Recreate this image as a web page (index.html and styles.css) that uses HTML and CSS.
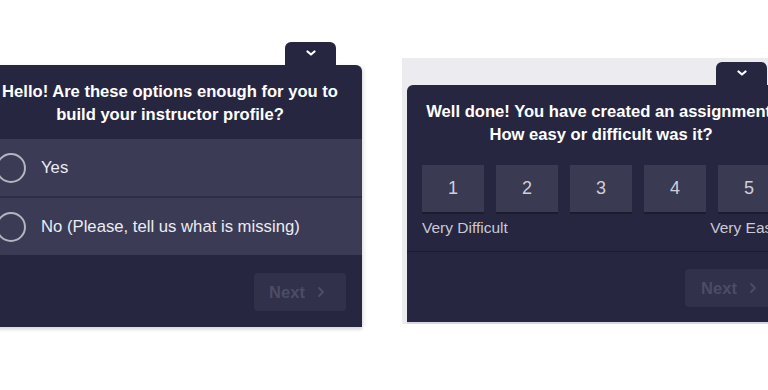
FILE: index.html
```html
<!DOCTYPE html>
<html lang="en">
<head>
  <meta charset="UTF-8" />
  <title>Feedback widgets</title>
  <meta name="viewport" content="width=device-width, initial-scale=1.0" />
  <link rel="stylesheet" href="styles.css">
</head>
<body>
  <div class="page">

    <!-- first survey: radio options -->
    <div class="shot shot-left">
      <div class="widget widget-left">
        <div class="tab-row">
          <div class="tab">
            <svg width="10" height="7" viewBox="0 0 10 7"><path d="M1.5 1.5l3.5 3 3.5-3" fill="none" stroke="#fff" stroke-width="2.2" stroke-linecap="round" stroke-linejoin="round"/></svg>
          </div>
        </div>
        <div class="panel">
          <div class="panel-head">
            <h2>Hello! Are these options enough for you to<br>build your instructor profile?</h2>
          </div>
          <div class="options">
            <label class="option"><span class="radio"></span>Yes</label>
            <label class="option"><span class="radio"></span>No (Please, tell us what is missing)</label>
          </div>
          <div class="panel-foot">
            <button class="next">Next
              <svg width="8" height="12" viewBox="0 0 8 12"><path d="M2 2l4 4-4 4" fill="none" stroke="#4c4c66" stroke-width="2" stroke-linecap="round" stroke-linejoin="round"/></svg>
            </button>
          </div>
        </div>
      </div>
    </div>

    <!-- second survey: 1..5 rating -->
    <div class="shot shot-right">
      <div class="widget widget-right">
        <div class="tab-row">
          <div class="tab">
            <svg width="10" height="7" viewBox="0 0 10 7"><path d="M1.5 1.5l3.5 3 3.5-3" fill="none" stroke="#fff" stroke-width="2.2" stroke-linecap="round" stroke-linejoin="round"/></svg>
          </div>
        </div>
        <div class="panel">
          <div class="panel-body">
            <h2>Well done! You have created an assignment.<br>How easy or difficult was it?</h2>
            <div class="scale">
              <div class="score">1</div>
              <div class="score">2</div>
              <div class="score">3</div>
              <div class="score">4</div>
              <div class="score">5</div>
            </div>
            <div class="scale-labels">
              <span>Very Difficult</span>
              <span>Very Easy</span>
            </div>
          </div>
          <div class="panel-foot panel-foot-line">
            <button class="next">Next
              <svg width="8" height="12" viewBox="0 0 8 12"><path d="M2 2l4 4-4 4" fill="none" stroke="#4c4c66" stroke-width="2" stroke-linecap="round" stroke-linejoin="round"/></svg>
            </button>
          </div>
        </div>
      </div>
    </div>

  </div>
</body>
</html>
```

FILE: styles.css
```css
* {
  margin: 0;
  padding: 0;
  box-sizing: border-box;
  font-family: 'Liberation Sans', Arial, sans-serif;
}

body {
  background: #fff;
  width: 768px;
  height: 390px;
  overflow: hidden;
}

.page {
  display: flex;
  align-items: flex-start;
}

.shot-left {
  margin-top: 42px;
  margin-left: -22px;
}

.shot-right {
  margin-top: 58px;
  margin-left: 40px;
  background: #ececf0;
  padding: 4px 0 2px 5px;
}

.widget {
  flex-shrink: 0;
}

.widget-left {
  width: 384px;
}

.widget-right {
  width: 388px;
}

.tab-row {
  display: flex;
  justify-content: flex-end;
  padding-right: 26px;
}

.widget-right .tab-row {
  padding-right: 28px;
}

.tab {
  width: 51px;
  height: 23px;
  background: #262640;
  border-radius: 6px 6px 0 0;
  display: flex;
  justify-content: center;
  padding-top: 8px;
}

.panel {
  background: #262640;
  border-radius: 6px 6px 0 0;
  color: #fff;
}

.widget-left .panel {
  box-shadow: 0 3px 3px rgba(0, 0, 0, 0.12), 3px 0 3px rgba(0, 0, 0, 0.06);
}

.widget-right .panel {
  box-shadow: 0 2px 0 #d8d6e6;
}

.panel h2 {
  font-size: 16.6px;
  line-height: 23px;
  font-weight: bold;
  text-align: center;
  color: #fff;
  white-space: nowrap;
}

.panel-head {
  padding: 15px 10px 13px;
  height: 74px;
}

.options {
  background: #3b3b55;
}

.option {
  display: flex;
  align-items: center;
  height: 57px;
  padding-left: 18px;
  font-size: 16.7px;
  color: #ececf2;
}

.option + .option {
  border-top: 2px solid #2d2d46;
  height: 59px;
}

.radio {
  width: 30px;
  height: 30px;
  border: 2px solid #b4b4c2;
  border-radius: 50%;
  margin-right: 15px;
}

.panel-foot {
  display: flex;
  justify-content: flex-end;
  padding: 18px 16px 16px;
}

.panel-foot-line {
  border-top: 1px solid #1b1b2e;
  padding: 17px 16px 15px;
}

.next {
  width: 92px;
  height: 38px;
  border: none;
  border-radius: 4px;
  background: #31314b;
  color: #4c4c66;
  font-weight: bold;
  font-size: 16.5px;
  display: flex;
  align-items: center;
  justify-content: center;
  gap: 12px;
  padding-right: 6px;
}

.widget-right .next {
  width: 94px;
}

.panel-body {
  padding: 15px 15px 14px;
}

.panel-body h2 {
  margin: 0 -8px;
}

.scale {
  display: flex;
  gap: 12px;
  margin-top: 19px;
}

.score {
  width: 62px;
  height: 47px;
  background: #3a3a53;
  box-shadow: 0 2px 0 #1c1c2e;
  display: flex;
  align-items: center;
  justify-content: center;
  font-size: 18px;
  color: #cfcfdb;
}

.scale-labels {
  display: flex;
  justify-content: space-between;
  margin-top: 7px;
  font-size: 15.5px;
  line-height: 18px;
  color: #c9c9d3;
}
```
